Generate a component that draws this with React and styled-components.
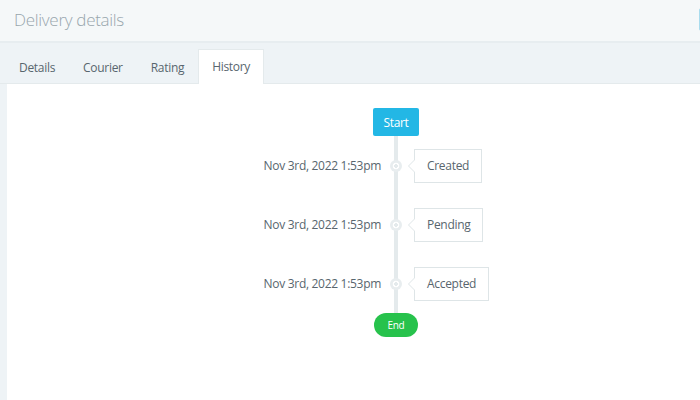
import React from "react";
import styled, { createGlobalStyle } from "styled-components";

const Global = createGlobalStyle`
  html, body { margin: 0; padding: 0; background: #ffffff; overflow: hidden; }
  body { font-family: "Open Sans", "Liberation Sans", sans-serif; letter-spacing: -0.3px; }
  * { box-sizing: border-box; }
`;

const Page = styled.div`
  width: 785px;
  height: 400px;
  display: flex;
  flex-direction: column;
  background: #eef3f6;
`;

const Header = styled.header`
  height: 43px;
  flex: none;
  display: flex;
  align-items: center;
  justify-content: space-between;
  padding: 0 14px;
  background: #f5f8f9;
  border-bottom: 2px solid #e7edf0;
`;

const Title = styled.h1`
  margin: 0;
  font-size: 17px;
  font-weight: 300;
  color: #98a6ad;
  line-height: 1;
  padding-bottom: 2px;
`;

const HeaderButton = styled.button`
  height: 23px;
  width: 72px;
  margin-bottom: 2px;
  border: 1px solid #a9dcee;
  background: #f5f8f9;
  border-radius: 2px;
`;

const TabBar = styled.nav`
  height: 41px;
  flex: none;
  display: flex;
  align-items: flex-end;
  padding: 0 0 0 5px;
  border-bottom: 1px solid #e4eaec;
`;

const Tab = styled.div`
  display: flex;
  align-items: center;
  padding: 0 13px;
  margin-bottom: -1px;
  font-size: 12px;
  color: #58666e;
  background: ${(p) => (p.$active ? "#ffffff" : "transparent")};
  border: 1px solid ${(p) => (p.$active ? "#e4eaec" : "transparent")};
  border-bottom: none;
  height: ${(p) => (p.$active ? "35px" : "34px")};
  padding-bottom: ${(p) => (p.$active ? "1px" : "0")};
`;

const Content = styled.main`
  flex: 1;
  margin-left: 7px;
  background: #ffffff;
  padding-top: 24px;
  display: flex;
  flex-direction: column;
  align-items: center;
`;

const Timeline = styled.div`
  width: 100%;
  display: flex;
  flex-direction: column;
  align-items: center;
`;

const StartBadge = styled.div`
  height: 28px;
  width: 46px;
  display: flex;
  align-items: center;
  justify-content: center;
  background: #23b7e5;
  color: #ffffff;
  font-size: 12px;
  border-radius: 2px;
`;

const EndBadge = styled.div`
  height: 24px;
  width: 44px;
  display: flex;
  align-items: center;
  justify-content: center;
  background: #27c24c;
  color: #ffffff;
  font-size: 10px;
  border-radius: 12px;
`;

const Row = styled.div`
  width: 100%;
  height: 59px;
  display: grid;
  grid-template-columns: 1fr 30px 1fr;
  align-items: center;
`;

const DateCell = styled.div`
  text-align: right;
  font-size: 12px;
  color: #58666e;
  padding-bottom: 1px;
`;

const NodeCell = styled.div`
  height: 100%;
  display: flex;
  align-items: center;
  justify-content: center;
  background: linear-gradient(#e4eaec, #e4eaec) center / 4px 100% no-repeat;
`;

const Dot = styled.span`
  width: 12px;
  height: 12px;
  border-radius: 50%;
  background: radial-gradient(circle, #e4eaec 0 1.6px, #ffffff 2px 3.2px, #e8edef 3.6px);
`;

const CardCell = styled.div`
  display: flex;
  align-items: center;
`;

const Card = styled.div`
  position: relative;
  margin-left: 3px;
  padding: 7px 12px;
  line-height: 18px;
  font-size: 12px;
  color: #58666e;
  background: #ffffff;
  border: 1px solid #dee5e7;
  &::before,
  &::after {
    content: "";
    position: absolute;
    top: 50%;
    width: 0;
    height: 0;
    border-style: solid;
    border-color: transparent;
  }
  &::before {
    left: -7px;
    margin-top: -7px;
    border-width: 7px 7px 7px 0;
    border-right-color: #dee5e7;
  }
  &::after {
    left: -6px;
    margin-top: -6px;
    border-width: 6px 6px 6px 0;
    border-right-color: #ffffff;
  }
`;

const events = [
  { date: "Nov 3rd, 2022 1:53pm", label: "Created" },
  { date: "Nov 3rd, 2022 1:53pm", label: "Pending" },
  { date: "Nov 3rd, 2022 1:53pm", label: "Accepted" },
];

const tabs = ["Details", "Courier", "Rating", "History"];

export default function App() {
  return (
    <Page>
      <Global />
      <Header>
        <Title>Delivery details</Title>
        <HeaderButton aria-label="action" />
      </Header>
      <TabBar>
        {tabs.map((t) => (
          <Tab key={t} $active={t === "History"}>
            {t}
          </Tab>
        ))}
      </TabBar>
      <Content>
        <Timeline>
          <StartBadge>Start</StartBadge>
          {events.map((e) => (
            <Row key={e.label}>
              <DateCell>{e.date}</DateCell>
              <NodeCell>
                <Dot />
              </NodeCell>
              <CardCell>
                <Card>{e.label}</Card>
              </CardCell>
            </Row>
          ))}
          <EndBadge>End</EndBadge>
        </Timeline>
      </Content>
    </Page>
  );
}
